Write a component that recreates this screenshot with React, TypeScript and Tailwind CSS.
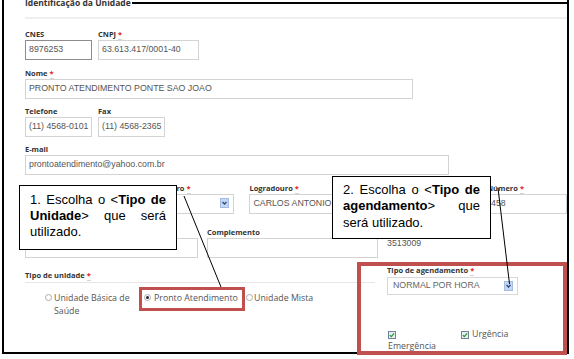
import React from "react";

const sans = "font-['Open_Sans',sans-serif]";
const arial = "font-['Liberation_Sans',Arial,sans-serif]";

function Req() {
  return <span className="ml-[2px] text-[#e02020] border-b border-[#d4d4d4]">*</span>;
}

function Label({ children, req }: { children: React.ReactNode; req?: boolean }) {
  return (
    <div className={`h-[11px] leading-[11px] text-[7.5px] font-bold text-[#333] whitespace-nowrap ${sans}`}>
      {children}
      {req && <Req />}
    </div>
  );
}

function TextInput({ value, focused }: { value?: string; focused?: boolean }) {
  return (
    <div
      className={`h-[20px] w-full border bg-white flex items-center pl-[3px] overflow-hidden whitespace-nowrap text-[8.8px] text-[#555] ${arial} ${
        focused ? "border-[#8c8c8c]" : "border-[#d3d3d3]"
      }`}
    >
      {value}
    </div>
  );
}

function SelectArrow() {
  return (
    <svg width="9" height="10" viewBox="0 0 9 10" className="block">
      <rect x="0.5" y="0.5" width="8" height="9" fill="#c4d6f3" stroke="#a3bce4" />
      <path d="M2.5 4 L4.5 6 L6.5 4" fill="none" stroke="#2b4a78" strokeWidth="1.3" />
    </svg>
  );
}

function Radio({ checked }: { checked?: boolean }) {
  return (
    <span className="mt-[2px] w-[7px] h-[7px] rounded-full border border-[#ababab] bg-white flex items-center justify-center shrink-0">
      {checked && <span className="w-[3px] h-[3px] rounded-full bg-[#222]" />}
    </span>
  );
}

function Check() {
  return (
    <svg width="8" height="8" viewBox="0 0 8 8" className="block mt-[3px] shrink-0">
      <rect x="0.5" y="0.5" width="7" height="7" fill="#e8edf2" stroke="#71839a" />
      <path d="M1.8 4.1 L3.3 5.6 L6.1 2.4" fill="none" stroke="#1f9a2e" strokeWidth="1.2" />
    </svg>
  );
}

function Callout({ className, children }: { className: string; children: React.ReactNode }) {
  return (
    <div
      className={`absolute bg-white border-[1.5px] border-black px-[10px] text-[13px] leading-[16.3px] text-black text-justify ${arial} ${className}`}
    >
      {children}
    </div>
  );
}

export default function App() {
  return (
    <div className="relative w-[574px] h-[359px] bg-white overflow-hidden">
      <div className="ml-[2px] w-[567px] h-[354px] border-l-2 border-r-2 border-b-2 border-black overflow-hidden">
        {/* cabeçalho */}
        <div className="h-[17px] flex items-start">
          <div className={`pl-[21px] mt-[-2px] text-[8.5px] leading-[10px] font-bold text-[#333] whitespace-nowrap ${sans}`}>
            Identificação da Unidade
          </div>
          <div className="flex-1 h-[2px] bg-black mt-[2px] ml-[1px]" />
        </div>
        <div className="ml-[21px] h-[2px] bg-[#efefef]" />

        <div className="pl-[21px]">
          <div className="flex mt-[10px]">
            <div className="w-[67px]">
              <Label>CNES</Label>
              <TextInput value="8976253" focused />
            </div>
            <div className="w-[101px] ml-[6px]">
              <Label req>CNPJ</Label>
              <TextInput value="63.613.417/0001-40" />
            </div>
          </div>

          <div className="w-[388px] mt-[8px]">
            <Label req>Nome</Label>
            <TextInput value="PRONTO ATENDIMENTO PONTE SAO JOAO" />
          </div>

          <div className="flex mt-[7px]">
            <div className="w-[67px]">
              <Label>Telefone</Label>
              <TextInput value="(11) 4568-0101" />
            </div>
            <div className="w-[67px] ml-[6px]">
              <Label>Fax</Label>
              <TextInput value="(11) 4568-2365" />
            </div>
          </div>

          <div className="w-[424px] mt-[7px]">
            <Label>E-mail</Label>
            <TextInput value="prontoatendimento@yahoo.com.br" />
          </div>

          <div className="flex mt-[8px]">
            <div className="w-[86px]">
              <Label req>CEP</Label>
              <TextInput value="13210-000" />
            </div>
            <div className="w-[128px] ml-[8px]">
              <Label req>Tipo de logradouro</Label>
              <div className="h-[20px] border border-[#d3d3d3] bg-white flex items-start justify-end pt-[3px] pr-[4px]">
                <SelectArrow />
              </div>
            </div>
            <div className="w-[245px] ml-[15px]">
              <Label req>Logradouro</Label>
              <TextInput value="CARLOS ANTONIO" />
            </div>
            <div className="w-[80px] ml-[7px] shrink-0">
              <Label req>Número</Label>
              <TextInput value="458" />
            </div>
          </div>

          <div className="flex mt-[13px]">
            <div className="w-[173px]">
              <Label>Bairro</Label>
              <TextInput value="PONTE SAO JOAO" />
            </div>
            <div className="w-[171px] ml-[9px]">
              <Label>Complemento</Label>
              <TextInput />
            </div>
            <div className="ml-[9px]">
              <Label>Código IBGE</Label>
              <div className={`leading-[11px] text-[8.8px] text-[#555] ${arial}`}>3513009</div>
            </div>
          </div>

          <div className="flex items-start">
            <div className="w-[350px] mt-[12px]">
              <div className="h-[13px] border-b border-[#e6e6e6]">
                <Label req>Tipo de unidade</Label>
              </div>
              <div className={`flex items-start mt-[9px] ml-[20px] text-[8.8px] leading-[12.5px] text-[#555] ${sans}`}>
                <Radio />
                <span className="ml-[2px] w-[84px]">Unidade Básica de Saúde</span>
                <span className="ml-[6px] flex items-start">
                  <Radio checked />
                  <span className="ml-[3px] w-[84px] whitespace-nowrap">Pronto Atendimento</span>
                </span>
                <span className="ml-[8px] flex items-start">
                  <Radio />
                  <span className="ml-[1px] whitespace-nowrap">Unidade Mista</span>
                </span>
              </div>
            </div>

            <div className="ml-[12px] mt-[7px]">
              <Label req>Tipo de agendamento</Label>
              <div className="mt-[1px] w-[131px] h-[18px] border border-[#d8d8d8] bg-white flex items-center justify-between pl-[5px] pr-[4px]">
                <span className={`text-[8.8px] text-[#666] ${arial}`}>NORMAL POR HORA</span>
                <SelectArrow />
              </div>
              <div className={`flex items-start mt-[33px] text-[8.8px] leading-[12.5px] text-[#555] ${sans}`}>
                <div className="w-[74px] pl-[1px]">
                  <Check />
                  <div className="mt-[1px]">Emergência</div>
                </div>
                <div className="flex items-start">
                  <Check />
                  <span className="ml-[3px]">Urgência</span>
                </div>
              </div>
            </div>
          </div>
        </div>
      </div>

      {/* anotações */}
      <div className="absolute left-[139px] top-[287px] w-[106px] h-[24px] border-[3px] border-[#c0504d]" />
      <div className="absolute left-[357px] top-[262px] w-[210px] h-[93px] border-[4px] border-[#c0504d]" />

      <Callout className="left-[19px] top-[185px] w-[158px] h-[65px] pt-[5.5px]">
        1. Escolha o &lt;<b>Tipo de Unidade</b>&gt; que será utilizado.
      </Callout>
      <Callout className="left-[332px] top-[176px] w-[159px] h-[63px] pt-[5px]">
        2. Escolha o &lt;<b>Tipo de agendamento</b>&gt; que será utilizado.
      </Callout>

      <svg className="absolute inset-0 pointer-events-none" width="574" height="359">
        <line x1="184" y1="196" x2="221" y2="287" stroke="#000" strokeWidth="1" />
        <line x1="498" y1="188" x2="509.5" y2="284" stroke="#000" strokeWidth="1" />
      </svg>
    </div>
  );
}
